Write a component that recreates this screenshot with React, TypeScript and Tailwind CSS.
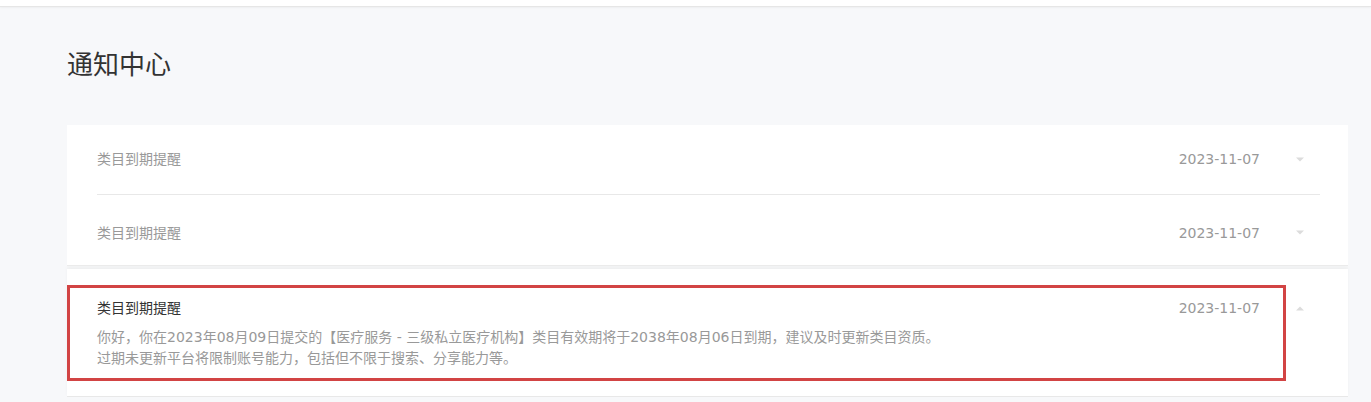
const ITEMS = [
  { title: '类目到期提醒', date: '2023-11-07' },
  { title: '类目到期提醒', date: '2023-11-07' },
] as const

function Caret({ up }: { up?: boolean }) {
  return (
    <svg width="10" height="6" viewBox="0 0 10 6" className="shrink-0">
      <path d={up ? 'M1 5.5 L5 1.5 L9 5.5 Z' : 'M1 0.5 L5 4.5 L9 0.5 Z'} fill="#dcdcdc" />
    </svg>
  )
}

export default function App() {
  return (
    <div
      className="min-h-[402px] bg-[#f7f8fa] text-[#333]"
      style={{ fontFamily: '"DejaVu Sans", "Noto Sans CJK SC", sans-serif' }}
    >
      <div className="h-[7px] border-b border-[#e6e6e6] bg-white shadow-[0_1px_2px_rgba(0,0,0,0.04)]" />
      <div className="pl-[67px] pr-[23px] pt-[40px]">
        <h1 className="text-[26px] leading-[36px] font-normal text-[#333]">通知中心</h1>

        <div className="mt-[42px] bg-white">
          {ITEMS.map((item, i) => (
            <div key={i} className="px-[30px] pr-[28px]">
              <div
                className={`flex h-[70px] items-center ${i === 0 ? 'border-b border-[#e8e8e8]' : 'pt-[6px]'}`}
              >
                <span className="flex-1 text-[14px] text-[#999]">{item.title}</span>
                <span className="text-[14px] text-[#999]">{item.date}</span>
                <span className="ml-[35px] mr-[15px] flex items-center">
                  <Caret />
                </span>
              </div>
            </div>
          ))}
          <div className="h-[4px] border-t border-[#ececec] bg-[#f5f6f7]" />

          <div className="relative border-b border-[#e8e8e8] bg-white pb-[27px] pt-[28px] shadow-[0_-2px_4px_rgba(0,0,0,0.03)]">
            <div className="flex items-center pl-[30px] pr-[28px]">
              <span className="flex-1 text-[14px] leading-[22px] text-[#333]">类目到期提醒</span>
              <span className="text-[14px] leading-[22px] text-[#999]">2023-11-07</span>
              <span className="ml-[35px] mr-[15px] flex items-center">
                <Caret up />
              </span>
            </div>
            <div className="mt-[8px] pl-[30px] text-[14px] leading-[21px] text-[#999]">
              <p>你好，你在2023年08月09日提交的【医疗服务 - 三级私立医疗机构】类目有效期将于2038年08月06日到期，建议及时更新类目资质。</p>
              <p>过期未更新平台将限制账号能力，包括但不限于搜索、分享能力等。</p>
            </div>
            <div className="pointer-events-none absolute left-0 top-[16px] h-[96px] w-[1219px] border-[3px] border-[#d24444]" />
          </div>
        </div>
      </div>
    </div>
  )
}
